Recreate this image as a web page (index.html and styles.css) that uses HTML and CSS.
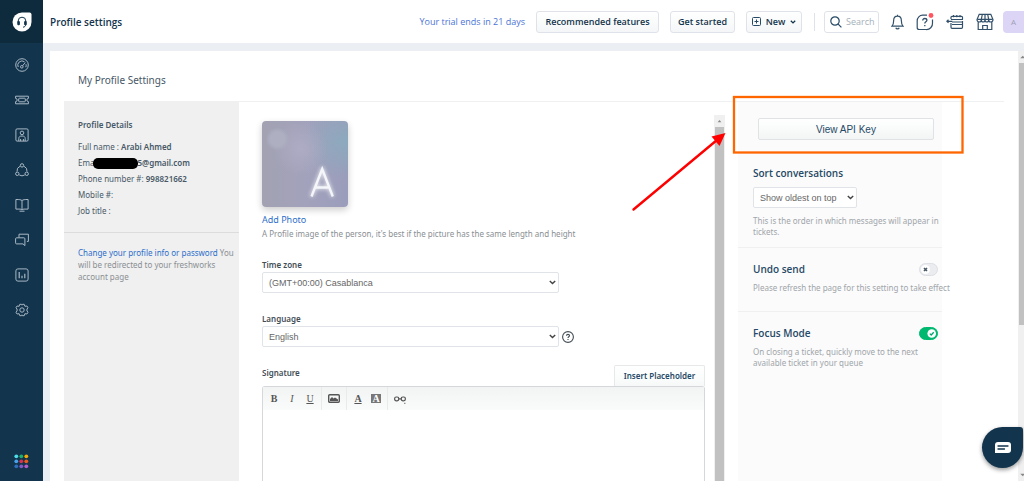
FILE: index.html
```html
<!DOCTYPE html>
<html lang="en">
<head>
<meta charset="utf-8">
<title>Profile settings</title>
<link rel="stylesheet" href="styles.css">
</head>
<body>
<nav class="sidebar" aria-label="Main">
  <a class="brand" href="#" aria-label="Home">
    <svg width="20" height="20" viewBox="0 0 20 20"><path d="M10 .5h7.500a2 2 0 0 1 2 2V10A9.500 9.500 0 1 1 10 .5z" fill="#fff"/><path d="M6.200 11.500V9a3.800 3.800 0 0 1 7.600 0v3c0 2-1 3-2.800 3.200" fill="none" stroke="#12344d" stroke-width="1"/><rect x="5.300" y="9" width="2.600" height="4.200" rx="1" fill="#12344d"/><rect x="12.100" y="9" width="2.600" height="4.200" rx="1" fill="#12344d"/></svg>
  </a>
  <div class="nav-list">
    <a href="#" aria-label="Dashboard"><svg class="ico" viewBox="0 0 14 14"><circle cx="7" cy="7" r="6.300"/><path d="M3.200 9A4.200 4.200 0 0 1 9.500 3.800M11 6.200a4.200 4.200 0 0 1-.2 3"/><circle cx="6.800" cy="8.800" r="1.300"/><path d="M7.600 7.800 10.200 4.500"/></svg></a>
    <a href="#" aria-label="Tickets"><svg class="ico" viewBox="0 0 14 14"><path d="M.6 3.200h12.800v2.200a1.600 1.600 0 0 0 0 3.200v2.200H.6V8.600a1.600 1.600 0 0 0 0-3.200z"/><rect x="3.700" y="5.200" width="6.600" height="3.600" rx=".8"/></svg></a>
    <a href="#" aria-label="Contacts"><svg class="ico" viewBox="0 0 14 14"><rect x=".9" y=".9" width="12.200" height="12.200" rx="1.200"/><circle cx="7" cy="4.900" r="1.800"/><path d="M3.800 13V10.500c0-1.600 1-2.500 3.200-2.500s3.200.9 3.200 2.500V13M5.600 11v2M8.400 11v2"/></svg></a>
    <a href="#" aria-label="Social"><svg class="ico" viewBox="0 0 14 14"><circle cx="7" cy="2.400" r="1.700"/><circle cx="2.300" cy="10.800" r="1.700"/><circle cx="11.700" cy="10.800" r="1.700"/><path d="M5 3.300A5 5 0 0 0 2 8.500M9 3.300a5 5 0 0 1 3 5.200M4.300 12a5 5 0 0 0 5.400 0"/></svg></a>
    <a href="#" aria-label="Solutions"><svg class="ico" viewBox="0 0 14 14"><path d="M7 2.500C5.800 1.700 4.500 1.500.9 1.500v9.600H5c1 0 1.500.3 2 .9.500-.6 1-.9 2-.9h4.100V1.500C9.500 1.500 8.200 1.700 7 2.500zV12M4.500 13.200h5"/></svg></a>
    <a href="#" aria-label="Forums"><svg class="ico" viewBox="0 0 14 14"><path d="M4 4.500V1.200h9.400v7.200h-1.500M1.600 4.800h7.300a1 1 0 0 1 1 1v6.800l-1.900-1.700H1.600a1 1 0 0 1-1-1V5.800a1 1 0 0 1 1-1z"/></svg></a>
    <a href="#" aria-label="Analytics"><svg class="ico" viewBox="0 0 14 14"><rect x=".9" y=".9" width="12.200" height="12.200" rx="2"/><path d="M4.200 4v6.300M7 7.800v2.500M9.800 5.800v4.500" stroke-width="1.200"/></svg></a>
    <a href="#" aria-label="Admin"><svg class="ico" viewBox="0 0 14 14"><circle cx="7" cy="7" r="2.200"/><path d="M4.800 1.300h1.700l.5.900.5-.9h1.700l.7 2 2-.3 1 1.500-1.200 2.500 1.200 2.500-1 1.500-2-.3-.7 2H7.500l-.5-.9-.5.900H4.800l-.7-2-2 .3-1-1.500L2.300 7 1.100 4.500l1-1.500 2 .3z"/></svg></a>
  </div>
  <a class="apps" href="#" aria-label="Switch product">
    <svg width="15" height="15" viewBox="0 0 15 15"><circle cx="2.300" cy="2.300" r="1.900" fill="#4fdbe8"/><circle cx="7.300" cy="2.300" r="1.900" fill="#1fae6c"/><circle cx="12.300" cy="2.300" r="1.900" fill="#f5a905"/><circle cx="2.300" cy="7.300" r="1.900" fill="#45a4ec"/><circle cx="7.300" cy="7.300" r="1.900" fill="#d9304f"/><circle cx="12.300" cy="7.300" r="1.900" fill="#ef5a19"/><circle cx="2.300" cy="12.300" r="1.900" fill="#2c6fba"/><circle cx="7.300" cy="12.300" r="1.900" fill="#8559c5"/><circle cx="12.300" cy="12.300" r="1.900" fill="#b75bc9"/></svg>
  </a>
</nav>

<div class="page">
  <header class="topbar">
    <h1>Profile settings</h1>
    <a class="trial" href="#">Your trial ends in 21 days</a>
    <button class="btn recommended" type="button">Recommended features</button>
    <button class="btn started" type="button">Get started</button>
    <button class="btn new" type="button">
      <svg width="9" height="9" viewBox="0 0 9 9" fill="none" stroke="#264966"><rect x=".5" y=".5" width="8" height="8" rx="1"/><path d="M4.500 2.500v4M2.500 4.500h4"/></svg>
      New
      <svg width="6" height="4" viewBox="0 0 6 4" fill="none" stroke="#12344d" stroke-width="1.300"><path d="m.8.7 2.200 2.200L5.200.7"/></svg>
    </button>
    <span class="split"></span>
    <label class="search">
      <svg width="12" height="12" viewBox="0 0 12 12" fill="none" stroke="#264966" stroke-width="1.200"><circle cx="5" cy="5" r="4.200"/><path d="m8.200 8.200 3.200 3.200"/></svg>
      <input type="text" placeholder="Search" aria-label="Search">
    </label>
    <div class="tools">
      <button type="button" aria-label="Notifications"><svg width="13" height="16" viewBox="0 0 13 16"><path d="M1 12.200h11c-1.300-1.300-1.600-2.200-1.600-5.200C10.400 4 9 2.200 6.500 2.200S2.600 4 2.600 7c0 3-.3 3.900-1.600 5.200zM6.500 2.200V.7M4.800 13.700a1.800 1.800 0 0 0 3.400 0"/></svg></button>
      <button type="button" aria-label="Help"><svg width="18" height="18" viewBox="0 0 18 18"><path d="M11 2.200H7A5.500 5.500 0 0 0 1.200 8v6.500a2 2 0 0 0 2 2H10A6 6 0 0 0 16.500 10V6.500"/><path d="M6.700 7.600C6.700 6 7.700 5.500 8.800 5.500s2.100.7 2.100 1.800c0 1.500-2.100 1.500-2.100 3.200M8.800 12v1.300" stroke-width="1.300"/><circle class="alert" cx="15" cy="2.500" r="2.400"/></svg></button>
      <button type="button" aria-label="Agent schedule"><svg width="18" height="16" viewBox="0 0 18 16"><path d="M5 5V3.300a1 1 0 0 1 1-1h9.500a1 1 0 0 1 1 1V5M5 5.500h12M7.500 1v2.300M10.800 1v2.300M14 1v2.300M.8 7.300h5.500M2.500 5.700.8 7.300l1.700 1.600M6 8h10.500M6 10.500h10.500M5 9v4.300a1 1 0 0 0 1 1h9.500a1 1 0 0 0 1-1V7"/></svg></button>
      <button type="button" aria-label="Marketplace"><svg width="18" height="18" viewBox="0 0 18 18"><path d="M3.200 1.300h11.600L17 6.500c0 1.500-1 2.500-2.200 2.500S12.700 8 12.700 6.700C12.700 8 12 9 10.900 9S9 8 9 6.700C9 8 8.200 9 7.100 9S5.300 8 5.300 6.700C5.300 8 4.400 9 3.200 9S1 8 1 6.500zM1.800 6.300h14.400M5.300 6.300 6.300 1.500M9 6.300V1.500M12.700 6.300l-1-4.800M2.200 9v7.500h13.600V9M6.700 16.300v-3.800h4.600v3.800"/></svg></button>
    </div>
    <button class="user" type="button" aria-label="Account">A</button>
  </header>

  <div class="content">
  <main class="panel">
    <h2>My Profile Settings</h2>
    <div class="columns">
      <section class="details">
        <div class="facts">
          <h3>Profile Details</h3>
          <p>Full name : <b>Arabi Ahmed</b></p>
          <p class="email">Ema<span class="redacted"></span><b>5@gmail.com</b></p>
          <p>Phone number #: <b>998821662</b></p>
          <p>Mobile #:</p>
          <p>Job title :</p>
        </div>
        <p class="redirect"><a href="#">Change your profile info or password</a> You will be redirected to your freshworks account page</p>
      </section>

      <form class="profile">
        <div class="avatar" role="img" aria-label="A">
          <svg viewBox="0 0 86 86"><path d="M49.500 75.500 60.200 48l10.600 27.500M53 66.500h14.500"/></svg>
        </div>
        <a class="add" href="#">Add Photo</a>
        <p class="hint">A Profile image of the person, it's best if the picture has the same length and height</p>
        <label class="caption" for="zone">Time zone</label>
        <div class="field">
          <span class="select"><select id="zone"><option>(GMT+00:00) Casablanca</option></select><svg viewBox="0 0 7 5"><path d="m.8.9 2.700 2.700L6.200.9"/></svg></span>
        </div>
        <label class="caption" for="lang">Language</label>
        <div class="field">
          <span class="select"><select id="lang"><option>English</option></select><svg viewBox="0 0 7 5"><path d="m.8.9 2.700 2.700L6.200.9"/></svg></span>
          <svg class="question" viewBox="0 0 12 12"><circle cx="6" cy="6" r="5.400"/><path d="M4.500 4.800c0-1 .7-1.400 1.500-1.400s1.500.5 1.500 1.300c0 1-1.500 1.100-1.500 2.200M6 7.900v1.100"/></svg>
        </div>
        <div class="signature">
          <label class="caption" for="sign">Signature</label>
          <button class="placeholder" type="button">Insert Placeholder</button>
        </div>
        <div class="editor">
          <div class="toolbar">
            <div class="group"><button type="button"><b>B</b></button><button type="button"><i>I</i></button><button type="button"><u>U</u></button></div>
            <div class="group image"><button type="button" aria-label="Image"><svg width="12" height="9" viewBox="0 0 12 9"><rect x=".7" y=".7" width="10.600" height="7.600" rx="1" fill="none" stroke="#555" stroke-width="1.400"/><path d="M2 7V5l2-2 1.500 1.500L7 3.500l3 2V7z" fill="#555"/></svg></button></div>
            <div class="group"><button type="button"><u><b>A</b></u></button><button type="button"><span class="mark">A</span></button></div>
            <div class="group"><button type="button" aria-label="Link"><svg width="12" height="10" viewBox="0 0 12 10" fill="none" stroke="#555" stroke-width="1.200"><rect x=".6" y="3" width="4.200" height="3.800" rx="1.700"/><rect x="7.200" y="3" width="4.200" height="3.800" rx="1.700"/><path d="M4.500 4.900h3"/><path d="M10 9.300h1.500" stroke-width=".8"/></svg></button></div>
          </div>
          <textarea id="sign"></textarea>
        </div>
      </form>

      <div class="scroll inner"><svg viewBox="0 0 12 12"><path d="m3.500 7.500 2.500-3 2.500 3z"/></svg><span class="thumb"></span></div>

      <aside class="options">
        <section>
          <button class="api" type="button">View API Key</button>
          <label class="title" for="sort">Sort conversations</label>
          <span class="select small"><select id="sort"><option>Show oldest on top</option></select><svg viewBox="0 0 7 5"><path d="m.8.9 2.700 2.700L6.200.9"/></svg></span>
          <p>This is the order in which messages will appear in tickets.</p>
        </section>
        <section>
          <div class="row"><label class="title" for="undo">Undo send</label><span class="switch"><input id="undo" type="checkbox"><svg viewBox="0 0 19 13"><circle cx="6.500" cy="6.500" r="4.500" fill="#fff"/><path d="m5 5 3 3m0-3L5 8" stroke="#475867" stroke-width="1.600"/></svg></span></div>
          <p class="single">Please refresh the page for this setting to take effect</p>
        </section>
        <section>
          <div class="row"><label class="title" for="focus">Focus Mode</label><span class="switch"><input id="focus" type="checkbox" checked><svg viewBox="0 0 19 13"><circle cx="12.700" cy="6.500" r="4.300" fill="#fff"/><path d="m10.800 6.600 1.400 1.400 2.500-2.700" fill="none" stroke="#00a36c" stroke-width="1.300"/></svg></span></div>
          <p>On closing a ticket, quickly move to the next available ticket in your queue</p>
        </section>
      </aside>
    </div>
  </main>
  <div class="scroll outer"><svg viewBox="0 0 6 12"><path d="m1.500 7.500 3-3 1.500 1.500v1.500z"/></svg><span class="thumb"></span><svg viewBox="0 0 6 12"><path d="m1.500 4.500 3 3L6 6V4.500z"/></svg></div>
  </div>
</div>

<button class="chat" type="button" aria-label="Chat"><svg width="18" height="14" viewBox="0 0 18 14"><path d="M4 1h10a3 3 0 0 1 3 3v5a3 3 0 0 1-3 3H1V4a3 3 0 0 1 3-3z" fill="#fff"/><path d="M4 5h10M4 8h6.500" stroke="#12344d" stroke-width="1.300" stroke-linecap="round"/></svg></button>

<svg class="callout" width="334" height="120" viewBox="0 0 334 120"><rect x="104" y="2" width="228.500" height="55.500" fill="none" stroke="#ff6600" stroke-width="2.300"/><path d="M3.500 114.500 87 45" stroke="#f00" stroke-width="2.400" stroke-linecap="round"/><path d="m95.500 38-6 13-8-9.500z" fill="#f00"/></svg>
</body>
</html>
```

FILE: styles.css
```css
* { box-sizing: border-box; }
body {
  margin: 0;
  height: 100vh;
  display: flex;
  position: relative;
  overflow: hidden;
  background: #ebeef3;
  color: #475867;
  font: 8px/16px "Noto Sans", "Open Sans", sans-serif;
}
h1, h2, h3, p { margin: 0; }
a { color: #2c6ecb; text-decoration: none; }
button, input, select, textarea { font: inherit; color: inherit; margin: 0; padding: 0; }
button { cursor: pointer; }
b { font-weight: 600; }

.sidebar { width: 43px; flex: none; display: flex; flex-direction: column; background: #12344d; }
.brand { height: 43px; display: grid; place-items: center; background: #0e2a3d; }
.nav-list { display: flex; flex-direction: column; padding-top: 4px; }
.nav-list a { height: 35px; display: grid; place-items: center; }
.ico { width: 14px; height: 14px; fill: none; stroke: #a9b8c4; stroke-width: 1; }
.apps { margin-top: auto; height: 39px; display: grid; place-items: center; }

.page { flex: 1; min-width: 0; display: flex; flex-direction: column; }
.topbar { height: 43px; flex: none; display: flex; align-items: center; padding-left: 7px; background: #fff; color: #12344d; font-family: "Open Sans", "Noto Sans", sans-serif; }
.topbar h1 { font-size: 10px; font-weight: 600; margin-right: auto; }
.trial { font-size: 9px; color: #4a74d6; margin-right: 11px; }
.btn { height: 22px; display: flex; align-items: center; justify-content: center; gap: 5px; border: 1px solid #dfe3e9; border-radius: 3px; background: linear-gradient(#fff, #f4f6f7); font-size: 9px; font-weight: 600; white-space: nowrap; }
.recommended { width: 123px; margin-right: 11px; }
.started { width: 65px; margin-right: 11px; }
.new { width: 56px; }
.split { width: 1px; height: 18px; margin: 0 9px 0 12px; background: #dfe3e9; }
.search { width: 55px; height: 22px; display: flex; align-items: center; gap: 4px; padding-left: 5px; border: 1px solid #dfe3e9; border-radius: 3px; }
.search svg { flex: none; }
.search input { flex: 1; min-width: 0; border: 0; outline: 0; background: none; font-size: 9px; }
.search input::placeholder { color: #a5afb9; }
.tools { display: flex; align-items: center; gap: 12px; margin: 0 9px 0 12px; }
.tools button { display: block; border: 0; background: none; }
.tools svg { display: block; fill: none; stroke: #33506a; stroke-width: 1.2; }
.tools .alert { fill: #ff5560; stroke: none; }
.user { width: 21px; height: 22px; border: 0; border-radius: 4px 0 0 4px; background: #dcd5f5; color: #a09fb5; font-size: 8px; }

.content { flex: 1; min-height: 0; display: flex; padding: 8px 0 0 7px; }
.panel { flex: 1; min-width: 0; display: flex; flex-direction: column; padding: 0 14px; background: #fff; }
.panel h2 { height: 51px; flex: none; padding: 21px 14px 0; border-bottom: 1px solid #eff0f1; font-size: 10px; font-weight: 400; }
.columns { flex: 1; min-height: 0; display: flex; }
.details { width: 175px; flex: none; background: #f0f0f0; }
.facts { padding: 15px 14px 13px; border-bottom: 1px solid #dcdcdc; }
.facts h3 { margin-bottom: 6px; font-size: 8px; font-weight: 600; }
.email { display: flex; align-items: center; }
.redacted { width: 45px; height: 11px; margin: 0 -1px; border-radius: 5px; background: #000; }
.redirect { padding: 14px 0 0 14px; line-height: 12px; color: #8a8f93; }

.profile { flex: 1; min-width: 0; display: flex; flex-direction: column; padding: 19px 9px 0 23px; }
.avatar { width: 86px; height: 86px; flex: none; border-radius: 4px; box-shadow: 0 3px 7px #0003; background: radial-gradient(circle at 18% 21%, #aeb0c1 0 7%, transparent 12%), radial-gradient(circle at 45% 32%, #aeacc4 0, transparent 36%), radial-gradient(ellipse at 100% 24%, #8caabd 0, transparent 40%), linear-gradient(90deg, #a2a2b2, #a3a2bc 50%, #9a9dbb); }
.avatar svg { display: block; fill: none; stroke: #f4f6fa; stroke-width: 2.4; filter: drop-shadow(0 0 2px #fff); }
.add { align-self: flex-start; margin-top: 5px; font-size: 9px; }
.hint { line-height: 12px; color: #8a8f93; }
.caption { font-weight: 600; color: #444d55; line-height: 14px; margin-top: 19px; }
.hint + .caption { margin-top: 18px; }
.field { display: flex; align-items: center; gap: 3px; }
.select { display: grid; width: 297px; height: 21px; align-items: center; }
.select > * { grid-area: 1 / 1; }
.select select { width: 100%; height: 100%; padding-left: 6px; appearance: none; border: 1px solid #e0e4e8; border-radius: 2px; background: #fff; font: 9px "Liberation Sans", Arial, sans-serif; color: #666; }
.select svg { width: 7px; height: 5px; justify-self: end; margin-right: 3px; fill: none; stroke: #444; stroke-width: 1.4; pointer-events: none; }
.question { width: 12px; height: 12px; fill: none; stroke: #444d55; stroke-width: 1.1; }
.signature { display: flex; justify-content: space-between; align-items: flex-start; margin-top: 18px; }
.signature .caption { margin-top: 1px; }
.placeholder { width: 91px; height: 21px; border: 1px solid #e6e8ea; border-bottom: 0; border-radius: 2px 2px 0 0; background: linear-gradient(#fff, #f7f9f9); font-weight: 600; color: #264966; }
.editor { flex: 1; min-height: 0; display: flex; flex-direction: column; border: 1px solid #d5d8da; border-bottom: 0; border-radius: 3px 3px 0 0; }
.toolbar { height: 23px; flex: none; display: flex; background: linear-gradient(#f2f3f3, #fafcfb); }
.group { display: flex; align-items: center; border-right: 1px solid #e9ebeb; padding: 0 2px; }
.image { padding: 0 3px; }
.group:last-child { border: 0; padding-left: 3px; }
.group button { width: 18px; height: 20px; border: 0; background: none; display: grid; place-items: center; color: #555; font: 10px "Liberation Serif", serif; }
.mark { width: 10px; line-height: 9px; background: #777; color: #fff; font-weight: bold; }
.editor textarea { flex: 1; resize: none; border: 0; outline: 0; background: none; padding: 6px; }

.scroll { display: flex; flex-direction: column; flex: none; background: #f0f0f0; }
.scroll svg { height: 12px; flex: none; fill: #888; }
.inner { width: 11px; margin: 13px 13px 0 0; padding: 0 1px; }
.inner .thumb { flex: 1; background: #c1c1c1; }
.outer { width: 6px; padding-left: 1px; }
.outer .thumb { height: 61%; margin-bottom: auto; background: #c1c1c1; }

.options { width: 204px; flex: none; margin-right: 62px; background: #fbfbfb; }
.options section { display: flex; flex-direction: column; padding: 12px 0 10px 15px; border-bottom: 1px solid #eff0f1; }
.options section:first-child { padding-top: 16px; }
.options section:nth-child(2) { padding-bottom: 18px; }
.options section:last-child { border: 0; }
.options p { line-height: 11px; color: #a0a5aa; }
.options .single { white-space: nowrap; }
.api { height: 22px; margin: 0 8px 24px 5px; border: 1px solid #dfe3e6; border-radius: 2px; background: linear-gradient(#fff, #f3f5f5); font: 10px "Liberation Sans", Arial, sans-serif; color: #264966; }
.title { font-family: "Open Sans", "Noto Sans", sans-serif; font-size: 10px; font-weight: 600; line-height: 18px; color: #264966; }
.small { width: 104px; margin: 5px 0 7px; }
.row { display: flex; justify-content: space-between; align-items: center; margin-bottom: 4px; }
.switch { width: 19px; height: 13px; display: grid; margin-right: 4px; }
.switch > * { grid-area: 1 / 1; }
.switch input { appearance: none; width: 100%; height: 100%; border: 1px solid #dcdfe4; border-radius: 7px; background: #ebecf0; }
.switch input:checked { background: #00b86f; border-color: #00b86f; }
.switch svg { z-index: 1; pointer-events: none; }

.chat { position: absolute; right: 1px; bottom: 13px; width: 41px; height: 41px; display: grid; place-items: center; border: 0; border-radius: 50% 3px 50% 50%; background: #12344d; box-shadow: 0 2px 4px #0006; }
.callout { position: absolute; left: 630px; top: 95px; pointer-events: none; }
```
